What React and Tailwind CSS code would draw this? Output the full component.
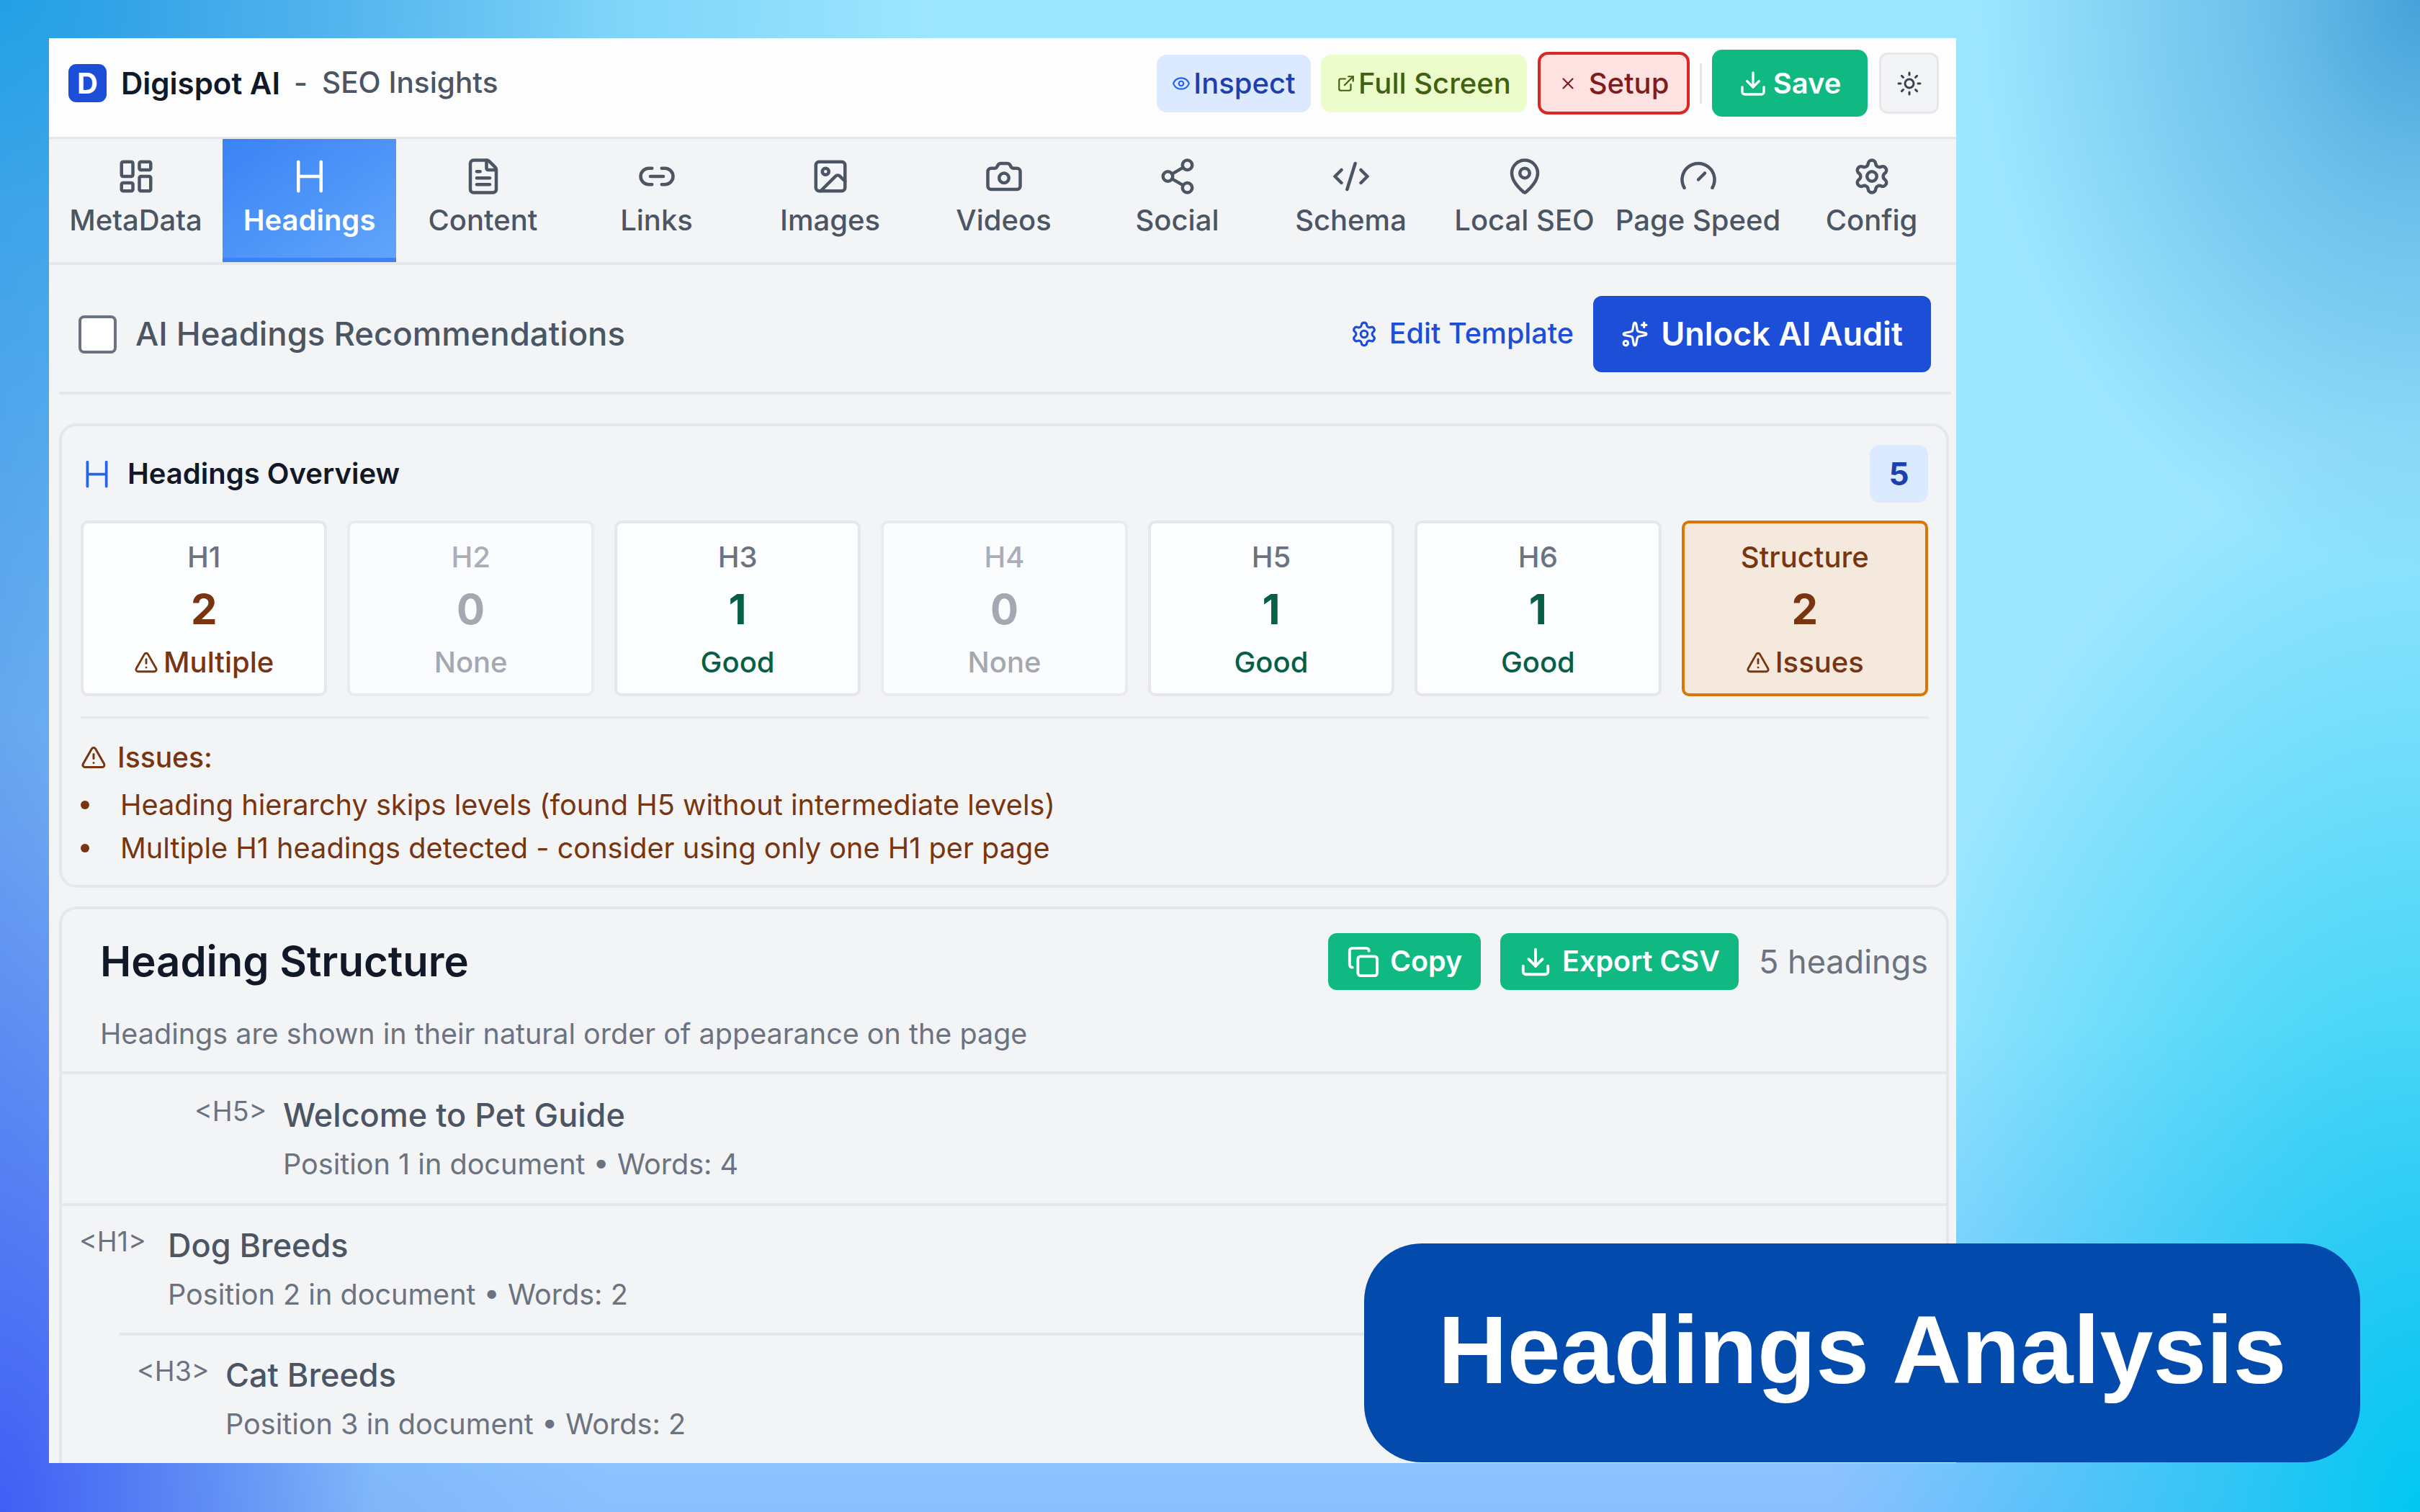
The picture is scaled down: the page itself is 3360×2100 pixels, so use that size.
import { LayoutDashboard, FileText, Link2, Image, Camera, Share2, CodeXml, MapPin, Gauge, Settings, Eye, ExternalLink, X, Download, Sun, Sparkles, TriangleAlert, Copy } from 'lucide-react';

// the H glyph in the picture is wider than lucide's Heading
function HIcon({ size, className }) {
  return (
    <svg width={size} height={size} viewBox="0 0 24 24" fill="none" stroke="currentColor" strokeWidth="2" strokeLinecap="round" className={className}>
      <path d="M5 3v18M19 3v18M5 12h14" />
    </svg>
  );
}

const tabs = [
  { label: 'MetaData', icon: LayoutDashboard },
  { label: 'Headings', icon: HIcon, active: true },
  { label: 'Content', icon: FileText },
  { label: 'Links', icon: Link2 },
  { label: 'Images', icon: Image },
  { label: 'Videos', icon: Camera },
  { label: 'Social', icon: Share2 },
  { label: 'Schema', icon: CodeXml },
  { label: 'Local SEO', icon: MapPin },
  { label: 'Page Speed', icon: Gauge },
  { label: 'Config', icon: Settings },
];

const stats = [
  { label: 'H1', value: 2, note: 'Multiple', tone: 'warn' },
  { label: 'H2', value: 0, note: 'None', tone: 'none' },
  { label: 'H3', value: 1, note: 'Good', tone: 'good' },
  { label: 'H4', value: 0, note: 'None', tone: 'none' },
  { label: 'H5', value: 1, note: 'Good', tone: 'good' },
  { label: 'H6', value: 1, note: 'Good', tone: 'good' },
  { label: 'Structure', value: 2, note: 'Issues', tone: 'issue' },
];

const issues = [
  'Heading hierarchy skips levels (found H5 without intermediate levels)',
  'Multiple H1 headings detected - consider using only one H1 per page',
];

const rows = [
  { tag: '<H5>', title: 'Welcome to Pet Guide', pos: 1, words: 4, box: 'ml-[160px] h-[179px] pt-[29px]' },
  { tag: '<H1>', title: 'Dog Breeds', pos: 2, words: 2, box: 'ml-0 h-[180px] pt-[27px] border-t-[4px]' },
  { tag: '<H3>', title: 'Cat Breeds', pos: 3, words: 2, box: 'ml-[80px] h-[180px] pt-[27px] border-t-[4px]' },
];

function StatCard({ label, value, note, tone }) {
  const box = {
    warn: 'bg-[#fcfdfe] border-[#e5e7eb]',
    none: 'bg-[#fbfcfd] border-[#e9ebee]',
    good: 'bg-[#fcfdfe] border-[#e5e7eb]',
    issue: 'bg-[#f5e9de] border-[#d97706]',
  }[tone];
  const head = {
    warn: 'text-[#6b7280]',
    none: 'text-[#a9aeb8]',
    good: 'text-[#6b7280]',
    issue: 'text-[#78350f]',
  }[tone];
  const num = {
    warn: 'text-[#78350f]',
    none: 'text-[#a4a8b1]',
    good: 'text-[#065f46]',
    issue: 'text-[#78350f]',
  }[tone];
  const warn = tone === 'warn' || tone === 'issue';
  return (
    <div className={`h-[244px] rounded-[10px] border-[4px] flex flex-col items-center ${box}`}>
      <div className={`mt-[19px] text-[40px] leading-[56px] font-medium ${head}`}>{label}</div>
      <div className={`mt-[10px] text-[58px] leading-[68px] font-bold ${num}`}>{value}</div>
      <div className={`mt-[15px] text-[40px] leading-[50px] font-medium flex items-center gap-[7px] ${num}`}>
        {warn && <TriangleAlert size={34} strokeWidth={2} />}
        {note}
      </div>
    </div>
  );
}

export default function App() {
  return (
    <div className="relative w-[3360px] h-[2100px] overflow-hidden pt-[53px] pl-[68px] font-['Inter',sans-serif] bg-[#9de6ff] bg-[radial-gradient(ellipse_620px_800px_at_100%_0%,#46a2da_0%,#46a2da90_35%,transparent_100%),radial-gradient(ellipse_820px_1500px_at_100%_100%,#00c8f0_0%,#00c8f0a0_35%,transparent_100%),radial-gradient(ellipse_520px_1100px_at_0%_100%,#405ef5_0%,#405ef5a0_35%,transparent_100%),radial-gradient(ellipse_1300px_1200px_at_0%_0%,#22a0e4_0%,#22a0e4a0_25%,#22a0e440_65%,transparent_100%),linear-gradient(90deg,#6fa9f0_0%,transparent_25%),linear-gradient(0deg,#8bbfff_0%,transparent_32%)]">
      <div className="w-[2648px] h-[1979px] overflow-hidden bg-[#f3f4f6] flex flex-col">
        {/* top bar */}
        <div className="h-[140px] shrink-0 bg-[#fdfdfe] border-b-[3px] border-[#e5e7eb] flex items-center pl-[27px] pr-[24px] pb-[12px]">
          <div className="w-[53px] h-[53px] rounded-[11px] bg-[#1d4ed8] text-white flex items-center justify-center text-[40px] font-bold">D</div>
          <div className="ml-[20px] text-[42px] font-semibold text-[#111827]">Digispot AI</div>
          <div className="ml-[19px] text-[41px] font-medium text-[#4b5563]">-</div>
          <div className="ml-[20px] text-[40.5px] font-medium text-[#4b5563]">SEO Insights</div>
          <div className="ml-auto flex items-center">
            <button className="w-[214px] h-[80px] rounded-[14px] bg-[#dbeafe] text-[#1e40af] flex items-center justify-center gap-[4px] text-[40px] font-medium">
              <Eye size={26} className="text-[#2563eb]" />Inspect
            </button>
            <button className="ml-[14px] w-[286px] h-[80px] rounded-[14px] bg-[#ecfccb] text-[#3f6212] flex items-center justify-center gap-[4px] text-[40px] font-medium">
              <ExternalLink size={26} />Full Screen
            </button>
            <button className="ml-[15px] w-[211px] h-[87px] rounded-[14px] bg-[#fee2e2] border-[4px] border-[#dc2626] text-[#7f1d1d] flex items-center justify-center gap-[16px] text-[40px] font-medium">
              <X size={26} />Setup
            </button>
            <div className="ml-[14px] w-[3px] h-[56px] bg-[#e5e7eb]" />
            <button className="ml-[14px] w-[216px] h-[93px] rounded-[14px] bg-[#10b981] text-white flex items-center justify-center gap-[8px] text-[40px] font-semibold">
              <Download size={40} />Save
            </button>
            <button className="ml-[16px] w-[83px] h-[85px] rounded-[12px] bg-[#f3f4f6] border-[3px] border-[#e5e7eb] text-[#374151] flex items-center justify-center">
              <Sun size={36} />
            </button>
          </div>
        </div>

        {/* tabs */}
        <div className="h-[175px] shrink-0 grid grid-cols-[repeat(11,241px)] border-b-[4px] border-[#e5e7eb]">
          {tabs.map(({ label, icon: Icon, active }) => (
            <div key={label} className={`flex flex-col items-center pt-[25px] ${active ? 'bg-gradient-to-br from-[#3b82f6] to-[#60a5fa] border-b-[6px] border-[#3b82f6] text-white font-semibold' : 'text-[#4b5563] font-medium'}`}>
              <Icon size={54} strokeWidth={2} />
              <div className="mt-[6px] text-[40px] leading-[56px] whitespace-nowrap">{label}</div>
            </div>
          ))}
        </div>

        {/* ai row */}
        <div className="ml-[14px] mr-[7px] h-[180px] shrink-0 border-b-[4px] border-[#e5e7eb] flex items-center pl-[27px] pr-[28px] pt-[16px]">
          <div className="w-[53px] h-[53px] rounded-[8px] bg-white border-[4px] border-[#6b7280]" />
          <div className="ml-[26px] text-[45.5px] font-medium text-[#4b5563]">AI Headings Recommendations</div>
          <div className="ml-auto flex items-center text-[#1d4ed8]">
            <Settings size={38} />
            <span className="ml-[16px] text-[39.5px] font-medium">Edit Template</span>
            <button className="ml-[27px] w-[469px] h-[106px] rounded-[12px] bg-[#1d4ed8] text-white flex items-center justify-center gap-[17px] text-[45px] font-semibold">
              <Sparkles size={38} />Unlock AI Audit
            </button>
          </div>
        </div>

        {/* overview */}
        <div className="ml-[14px] mr-[10px] mt-[40px] shrink-0 h-[645px] rounded-[24px] border-[4px] border-[#e5e7eb] pl-[26px] pr-[25px] flex flex-col">
          <div className="h-[108px] mt-[12px] mb-[11px] flex items-center shrink-0">
            <HIcon size={45} className="text-[#2563eb]" />
            <div className="ml-[20px] text-[40px] font-semibold text-[#111827]">Headings Overview</div>
            <div className="ml-auto w-[81px] h-[80px] rounded-[14px] bg-[#dbeafe] text-[#1e40af] flex items-center justify-center text-[44px] font-bold">5</div>
          </div>
          <div className="grid grid-cols-7 gap-[28px]">
            {stats.map((s) => <StatCard key={s.label} {...s} />)}
          </div>
          <div className="mt-[28px] border-t-[3px] border-[#e5e7eb] pt-[30px] text-[#78350f]">
            <div className="flex items-center gap-[15px] text-[39px] leading-[48px] font-medium">
              <TriangleAlert size={36} />Issues:
            </div>
            <ul className="mt-[12px] text-[39.7px] leading-[60px]">
              {issues.map((text) => (
                <li key={text} className="flex items-center">
                  <span className="w-[12px] h-[12px] rounded-full bg-[#78350f]" />
                  <span className="ml-[43px]">{text}</span>
                </li>
              ))}
            </ul>
          </div>
        </div>

        {/* structure */}
        <div className="ml-[14px] mr-[10px] mt-[26px] flex-1 rounded-t-[24px] border-[4px] border-b-0 border-[#e5e7eb] flex flex-col min-h-0">
          <div className="h-[229px] shrink-0 border-b-[4px] border-[#e5e7eb] pl-[53px] pr-[25px] pt-[33px]">
            <div className="flex items-center h-[79px]">
              <div className="text-[58px] font-semibold text-[#111827]">Heading Structure</div>
              <button className="ml-auto w-[212px] h-[79px] rounded-[12px] bg-[#10b981] text-white flex items-center justify-center gap-[14px] text-[39.5px] font-semibold">
                <Copy size={46} />Copy
              </button>
              <button className="ml-[27px] w-[331px] h-[79px] rounded-[12px] bg-[#10b981] text-white flex items-center justify-center gap-[14px] text-[39.5px] font-semibold">
                <Download size={46} />Export CSV
              </button>
              <div className="ml-[28px] text-[45px] text-[#6b7280]">5 headings</div>
            </div>
            <div className="mt-[32px] text-[39.5px] text-[#6b7280]">Headings are shown in their natural order of appearance on the page</div>
          </div>
          {rows.map((r) => (
            <div key={r.title} className={`shrink-0 border-[#e5e7eb] pl-[24px] flex ${r.box}`}>
              <div className="w-[95px] text-[37.5px] leading-[46px] text-[#6b7280] whitespace-nowrap">{r.tag}</div>
              <div className="ml-[28px]">
                <div className="text-[45px] leading-[56px] font-medium text-[#4b5563]">{r.title}</div>
                <div className="mt-[12px] text-[39.6px] leading-[56px] text-[#6b7280]">Position {r.pos} in document • Words: {r.words}</div>
              </div>
            </div>
          ))}
        </div>
      </div>

      {/* corner badge */}
      <div className="absolute left-[1894px] top-[1727px] w-[1383px] h-[304px] rounded-[80px] bg-[#034aad] pb-[8px] flex items-center justify-center font-['Liberation_Sans',sans-serif] font-bold text-white text-[133px] leading-none">
        Headings Analysis
      </div>
    </div>
  );
}
